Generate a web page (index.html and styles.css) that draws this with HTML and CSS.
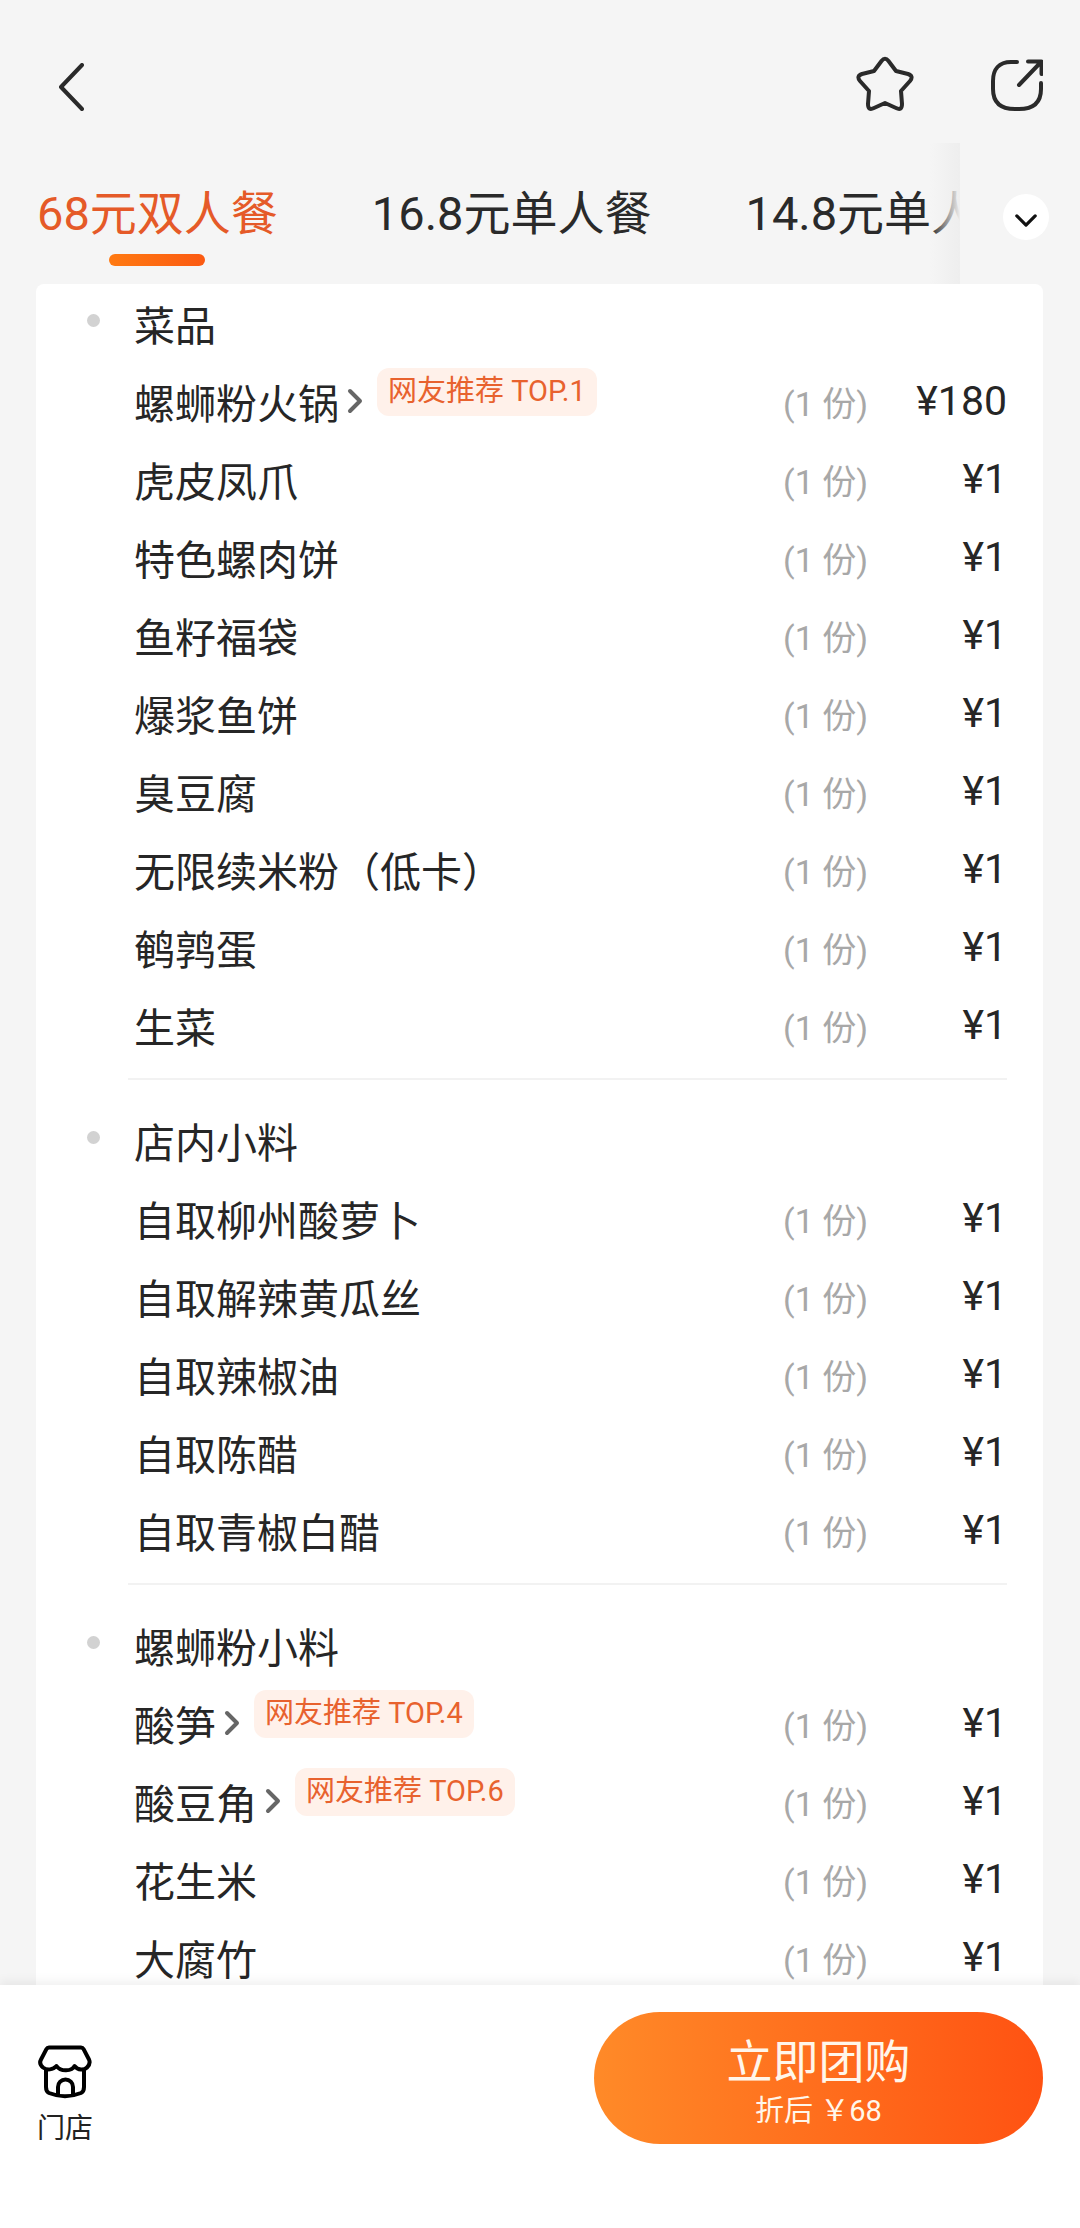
FILE: index.html
```html
<!DOCTYPE html>
<html lang="zh-CN">
<head>
<meta charset="utf-8">
<title>团购详情</title>
<link rel="stylesheet" href="styles.css">
</head>
<body>
<div class="screen">
  <div class="main">
    <header class="topbar">
      <svg class="ico-back" viewBox="0 0 26 48"><path d="M24 2 3 24l21 22"/></svg>
      <div class="top-actions">
        <svg class="ico-star" viewBox="0 0 58 56"><path d="M25.5 5Q29 0.5 32.5 5L40 15 52 18Q58 20 54 25L45 35 46 48Q46 55 40 52L29 47 18 52Q12 55 12 48L13 35 4 25Q0 20 6 18L18 15Z"/></svg>
        <svg class="ico-share" viewBox="0 0 52 52"><path d="M26 3H20C8 3 2 10 2 22V30C2 44 10 50 24 50H28C42 50 50 44 50 30V24"/><path d="M28 26 50 3M37 2.500H50.500V15"/></svg>
      </div>
    </header>
    <nav class="tabbar">
      <div class="tabs">
        <div class="tab tab-active"><span>68元双人餐</span><i class="tab-line"></i></div>
        <div class="tab"><span>16.8元单人餐</span></div>
        <div class="tab"><span>14.8元单人餐</span></div>
      </div>
      <div class="tab-more">
        <div class="more-btn"><svg class="ico-down" viewBox="0 0 24 14"><path d="M2 2l10 10L22 2"/></svg></div>
      </div>
    </nav>
    <section class="card">
      <div class="group">
        <div class="head"><i class="dot"></i>菜品</div>
        <div class="row"><span class="name">螺蛳粉火锅</span><svg class="ico-go" viewBox="0 0 16 26"><path d="M3 3l10 10L3 23"/></svg><span class="badge">网友推荐 TOP.1</span><span class="qty">(1 份)</span><span class="price">¥180</span></div>
        <div class="row"><span class="name">虎皮凤爪</span><span class="qty">(1 份)</span><span class="price">¥1</span></div>
        <div class="row"><span class="name">特色螺肉饼</span><span class="qty">(1 份)</span><span class="price">¥1</span></div>
        <div class="row"><span class="name">鱼籽福袋</span><span class="qty">(1 份)</span><span class="price">¥1</span></div>
        <div class="row"><span class="name">爆浆鱼饼</span><span class="qty">(1 份)</span><span class="price">¥1</span></div>
        <div class="row"><span class="name">臭豆腐</span><span class="qty">(1 份)</span><span class="price">¥1</span></div>
        <div class="row"><span class="name">无限续米粉（低卡）</span><span class="qty">(1 份)</span><span class="price">¥1</span></div>
        <div class="row"><span class="name">鹌鹑蛋</span><span class="qty">(1 份)</span><span class="price">¥1</span></div>
        <div class="row"><span class="name">生菜</span><span class="qty">(1 份)</span><span class="price">¥1</span></div>
      </div>
      <div class="group">
        <div class="head"><i class="dot"></i>店内小料</div>
        <div class="row"><span class="name">自取柳州酸萝卜</span><span class="qty">(1 份)</span><span class="price">¥1</span></div>
        <div class="row"><span class="name">自取解辣黄瓜丝</span><span class="qty">(1 份)</span><span class="price">¥1</span></div>
        <div class="row"><span class="name">自取辣椒油</span><span class="qty">(1 份)</span><span class="price">¥1</span></div>
        <div class="row"><span class="name">自取陈醋</span><span class="qty">(1 份)</span><span class="price">¥1</span></div>
        <div class="row"><span class="name">自取青椒白醋</span><span class="qty">(1 份)</span><span class="price">¥1</span></div>
      </div>
      <div class="group">
        <div class="head"><i class="dot"></i>螺蛳粉小料</div>
        <div class="row"><span class="name">酸笋</span><svg class="ico-go" viewBox="0 0 16 26"><path d="M3 3l10 10L3 23"/></svg><span class="badge">网友推荐 TOP.4</span><span class="qty">(1 份)</span><span class="price">¥1</span></div>
        <div class="row"><span class="name">酸豆角</span><svg class="ico-go" viewBox="0 0 16 26"><path d="M3 3l10 10L3 23"/></svg><span class="badge">网友推荐 TOP.6</span><span class="qty">(1 份)</span><span class="price">¥1</span></div>
        <div class="row"><span class="name">花生米</span><span class="qty">(1 份)</span><span class="price">¥1</span></div>
        <div class="row"><span class="name">大腐竹</span><span class="qty">(1 份)</span><span class="price">¥1</span></div>
      </div>
    </section>
  </div>
  <footer class="bottom">
    <div class="store">
      <svg class="ico-store" viewBox="0 0 54 54"><path d="M11 2.500H43a3 3 0 0 1 2.600 1.600L51 14.500c1.600 3.400 0 6-2 8-3 3-9 3-12.500-1.500-2.500 5.500-14 6-18 0C15 25 9 25.500 5 22.500c-2.400-2-3.600-5-2-8L8.400 4.100A3 3 0 0 1 11 2.500Z"/><path d="M8 25V42c0 3 1 5 3 6 10 4 22 4 32 0 2-1 3-3 3-6V25"/><path d="M20 50V42a7.500 7.500 0 0 1 15 0V50"/></svg>
      <span class="store-label">门店</span>
    </div>
    <button class="buy">
      <span class="buy-title">立即团购</span>
      <span class="buy-sub">折后 ￥68</span>
    </button>
  </footer>
</div>
</body>
</html>
```
FILE: styles.css
```css
* { box-sizing: border-box; }
html, body { margin: 0; padding: 0; }
body {
  width: 1080px;
  height: 2228px;
  overflow: hidden;
  font-family: Roboto, "Noto Sans CJK SC", sans-serif;
  color: #222;
  background: #f5f5f5;
}
.screen { height: 2228px; display: flex; flex-direction: column; }
.main { flex: 1; min-height: 0; overflow: hidden; }

.topbar {
  height: 143px;
  padding: 59px 37px 0 58px;
  display: flex;
  justify-content: space-between;
  align-items: flex-start;
}
.ico-back { width: 26px; height: 48px; margin-top: 4px; fill: none; stroke: #2a2a2a; stroke-width: 4; stroke-linecap: round; stroke-linejoin: round; }
.top-actions { display: flex; gap: 77px; margin-top: -3px; }
.ico-star { width: 58px; height: 56px; fill: none; stroke: #2a2a2a; stroke-width: 4; stroke-linejoin: round; }
.ico-share { width: 52px; height: 52px; margin-top: 3px; fill: none; stroke: #2a2a2a; stroke-width: 4; stroke-linecap: round; stroke-linejoin: round; }

.tabbar { height: 141px; display: flex; }
.tabs {
  width: 960px;
  padding-left: 37px;
  display: flex;
  gap: 94px;
  overflow: hidden;
  position: relative;
}
.tabs::after {
  content: "";
  position: absolute;
  top: 0; bottom: 0; right: 0;
  width: 30px;
  background: linear-gradient(to right, rgba(238,238,238,0), #eeeeee);
}
.tab {
  flex: none;
  padding-top: 42px;
  font-size: 47px;
  line-height: 58px;
  display: flex;
  flex-direction: column;
  align-items: center;
  color: #2a2a2a;
}
.tab-active { color: #e55a28; }
.tab-line {
  width: 96px;
  height: 12px;
  margin-top: 11px;
  border-radius: 6px;
  background: linear-gradient(to right, #ff7a12, #fb5a12);
}
.tab-more { flex: 1; padding: 51px 31px 0 0; display: flex; justify-content: flex-end; align-items: flex-start; }
.more-btn { width: 46px; height: 46px; border-radius: 50%; background: #fff; display: flex; align-items: center; justify-content: center; padding-top: 6px; }
.ico-down { width: 22px; height: 13px; fill: none; stroke: #111; stroke-width: 3.500; stroke-linecap: round; stroke-linejoin: round; }

.card {
  margin: 0 37px 0 36px;
  background: #fff;
  border-radius: 8px 8px 0 0;
  padding-right: 36px;
}
.group { margin-left: 51px; padding-bottom: 15px; margin-bottom: 22px; border-bottom: 0; position: relative; }
.group + .group::before {
  content: "";
  position: absolute;
  top: -23px;
  left: 41px;
  right: 0;
  height: 2px;
  background: #f2f2f2;
}
.head, .row {
  height: 78px;
  font-size: 41px;
  display: flex;
  align-items: center;
  color: #262626;
}
.dot { width: 13px; height: 13px; margin: -6px 34px 0 0; border-radius: 50%; background: #d2d2d2; }
.row { padding-left: 47px; }
.ico-go { width: 16px; height: 26px; margin-left: 8px; fill: none; stroke: #666; stroke-width: 4; stroke-linecap: round; stroke-linejoin: round; }
.badge {
  align-self: flex-start;
  height: 48px;
  margin: 6px 0 0 14px;
  padding: 0 11px;
  border-radius: 12px;
  background: #fff1ea;
  color: #e8622e;
  font-size: 29px;
  line-height: 46px;
}
.qty { margin-left: auto; width: 90px; font-size: 34px; color: #a8a8a8; white-space: nowrap; }
.price { width: 134px; text-align: right; font-size: 41px; }

.bottom {
  flex: none;
  height: 243px;
  background: #fff;
  box-shadow: 0 -4px 10px rgba(0,0,0,0.06);
  position: relative;
  display: flex;
  justify-content: space-between;
  align-items: flex-start;
  padding: 27px 37px 0 37px;
}
.store { display: flex; flex-direction: column; align-items: center; margin-top: 33px; }
.ico-store { width: 54px; height: 54px; fill: none; stroke: #000; stroke-width: 4; stroke-linejoin: round; stroke-linecap: round; }
.store-label { margin-top: 12px; font-size: 28px; line-height: 36px; color: #222; }
.buy {
  width: 449px;
  height: 132px;
  border: 0;
  border-radius: 66px;
  background: linear-gradient(to right, #ff8a28, #ff5212);
  color: #fff6ea;
  font-family: inherit;
  display: flex;
  flex-direction: column;
  align-items: center;
  padding: 21px 0 0;
}
.buy-title { font-size: 46px; line-height: 58px; }
.buy-sub { font-size: 29px; line-height: 38px; margin-top: 1px; }
```
